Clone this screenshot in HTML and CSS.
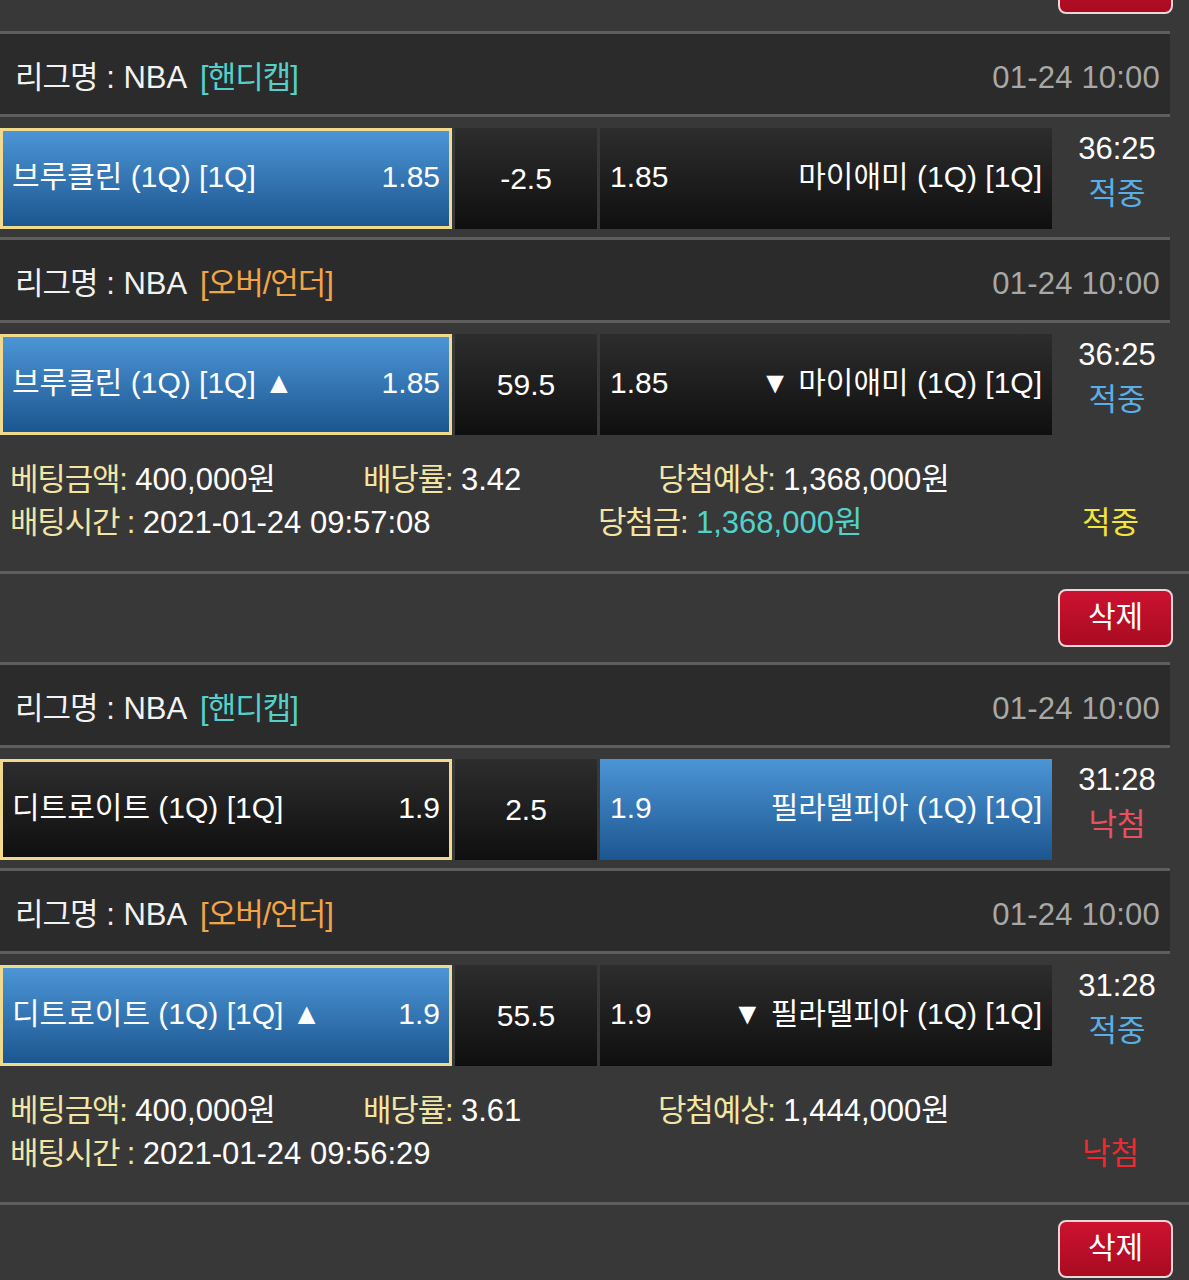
FILE: index.html
```html
<!DOCTYPE html>
<html lang="ko">
<head>
<meta charset="utf-8">
<title>배팅내역</title>
<link rel="stylesheet" href="styles.css">
</head>
<body>
<div class="feed">
  <div class="actions first"><button class="del-btn">삭제</button></div>

  <section class="bet">
    <div class="game-head"><span class="league"><span class="ko">리그명</span> : NBA <span class="tag teal">[핸디캡]</span></span><span class="date">01-24 10:00</span></div>
    <div class="match">
      <div class="pick chosen on"><span>브루클린 (1Q) [1Q]</span><span>1.85</span></div>
      <div class="line-cell">-2.5</div>
      <div class="pick away"><span>1.85</span><span>마이애미 (1Q) [1Q]</span></div>
      <div class="result"><span class="time">36:25</span><span class="st blue">적중</span></div>
    </div>
    <div class="game-head"><span class="league"><span class="ko">리그명</span> : NBA <span class="tag orange">[오버/언더]</span></span><span class="date">01-24 10:00</span></div>
    <div class="match">
      <div class="pick chosen on"><span>브루클린 (1Q) [1Q] ▲</span><span>1.85</span></div>
      <div class="line-cell">59.5</div>
      <div class="pick away"><span>1.85</span><span>▼ 마이애미 (1Q) [1Q]</span></div>
      <div class="result"><span class="time">36:25</span><span class="st blue">적중</span></div>
    </div>
    <div class="info">
      <div class="info-line">
        <span class="c1"><span class="lbl">베팅금액:</span> 400,000원</span>
        <span class="c2"><span class="lbl">배당률:</span> 3.42</span>
        <span class="c3"><span class="lbl">당첨예상:</span> 1,368,000원</span>
      </div>
      <div class="info-line">
        <span class="w1"><span class="lbl">배팅시간 :</span> 2021-01-24 09:57:08</span>
        <span class="w2"><span class="lbl">당첨금:</span> <span class="teal-val">1,368,000원</span></span>
        <span class="status win">적중</span>
      </div>
    </div>
    <div class="actions"><button class="del-btn">삭제</button></div>
  </section>

  <section class="bet">
    <div class="game-head"><span class="league"><span class="ko">리그명</span> : NBA <span class="tag teal">[핸디캡]</span></span><span class="date">01-24 10:00</span></div>
    <div class="match">
      <div class="pick chosen"><span>디트로이트 (1Q) [1Q]</span><span>1.9</span></div>
      <div class="line-cell">2.5</div>
      <div class="pick away on"><span>1.9</span><span>필라델피아 (1Q) [1Q]</span></div>
      <div class="result"><span class="time">31:28</span><span class="st red">낙첨</span></div>
    </div>
    <div class="game-head"><span class="league"><span class="ko">리그명</span> : NBA <span class="tag orange">[오버/언더]</span></span><span class="date">01-24 10:00</span></div>
    <div class="match">
      <div class="pick chosen on"><span>디트로이트 (1Q) [1Q] ▲</span><span>1.9</span></div>
      <div class="line-cell">55.5</div>
      <div class="pick away"><span>1.9</span><span>▼ 필라델피아 (1Q) [1Q]</span></div>
      <div class="result"><span class="time">31:28</span><span class="st blue">적중</span></div>
    </div>
    <div class="info">
      <div class="info-line">
        <span class="c1"><span class="lbl">베팅금액:</span> 400,000원</span>
        <span class="c2"><span class="lbl">배당률:</span> 3.61</span>
        <span class="c3"><span class="lbl">당첨예상:</span> 1,444,000원</span>
      </div>
      <div class="info-line">
        <span class="w1"><span class="lbl">배팅시간 :</span> 2021-01-24 09:56:29</span>
        <span class="w2"></span>
        <span class="status lose">낙첨</span>
      </div>
    </div>
    <div class="actions"><button class="del-btn">삭제</button></div>
  </section>
</div>
</body>
</html>
```

FILE: styles.css
```css
* { box-sizing: border-box; }

html, body {
  margin: 0;
  padding: 0;
  background: #383838;
}

body {
  width: 1189px;
  height: 1280px;
  overflow: hidden;
  font-family: "Liberation Sans", "Noto Sans CJK KR", sans-serif;
  color: #ffffff;
  font-size: 31px;
}

.feed {
  margin-top: -57px;
}

.actions {
  height: 91px;
  border-top: 3px solid #5e5e5e;
  display: flex;
  justify-content: flex-end;
  align-items: center;
  padding-right: 16px;
  width: 1189px;
}

.actions.first {
  border-top: none;
  height: 88px;
  align-items: flex-end;
  padding-bottom: 17px;
}

.del-btn {
  width: 115px;
  height: 58px;
  border: 2px solid #ecd6d8;
  border-radius: 8px;
  background: linear-gradient(#cc1230, #a90b22);
  color: #ffffff;
  font-family: "Liberation Sans", "Noto Sans CJK KR", sans-serif;
  font-size: 30px;
  line-height: 36px;
  padding: 0 0 2px;
  display: flex;
  align-items: center;
  justify-content: center;
}

.game-head {
  width: 1170px;
  height: 83px;
  border-top: 3px solid #5e5e5e;
  background: #2b2b2b;
  display: flex;
  align-items: center;
  justify-content: space-between;
  padding: 8px 10px 0 15px;
  line-height: 40px;
}

.league {
  color: #f2f2f2;
  white-space: pre;
}

.ko { letter-spacing: -1px; }

.tag { margin-left: 6px; letter-spacing: -1px; }
.tag.teal { color: #55d0c9; }
.tag.orange { color: #f2a546; }

.date {
  color: #a8a8a8;
  letter-spacing: 0.2px;
}

.match {
  width: 1170px;
  height: 123px;
  border-top: 3px solid #5e5e5e;
  padding: 11px 0 8px;
  display: flex;
}

.pick {
  width: 452px;
  height: 101px;
  display: flex;
  align-items: center;
  justify-content: space-between;
  padding: 0 12px 4px;
  font-size: 30px;
  line-height: 36px;
  background: linear-gradient(#2d2d2d, #0f0f0f);
  margin-right: 3px;
  white-space: pre;
}

.pick.away {
  padding: 0 10px 4px;
  margin-right: 0;
}

.pick.chosen {
  border: 3px solid #f1da8c;
  padding: 0 9px 4px;
}

.pick.on {
  background: linear-gradient(#4c95d6, #1c5690);
}

.line-cell {
  width: 142px;
  height: 101px;
  margin-right: 3px;
  display: flex;
  align-items: center;
  justify-content: center;
  padding-top: 1px;
  font-size: 30px;
  line-height: 36px;
  background: linear-gradient(#2d2d2d, #0f0f0f);
}

.result {
  flex: 1;
  display: flex;
  flex-direction: column;
  align-items: center;
  padding-left: 12px;
}

.time {
  line-height: 40px;
  margin-top: 1px;
  color: #ffffff;
}

.st {
  line-height: 46px;
  margin-top: 2px;
}

.st.blue { color: #5aaee6; }
.st.red { color: #e8505f; }

.info {
  height: 128px;
  padding: 15px 0 0 10px;
}

.info-line {
  display: flex;
  line-height: 43px;
  white-space: pre;
}

.lbl {
  color: #f3e5a5;
  letter-spacing: -1.2px;
}

.c1 { width: 353px; }
.c2 { width: 295px; }
.w1 { width: 588px; }
.w2 { width: 484px; }

.teal-val { color: #52d2cb; }

.status.win { color: #f3e53a; }
.status.lose { color: #ec2a2f; }
```
